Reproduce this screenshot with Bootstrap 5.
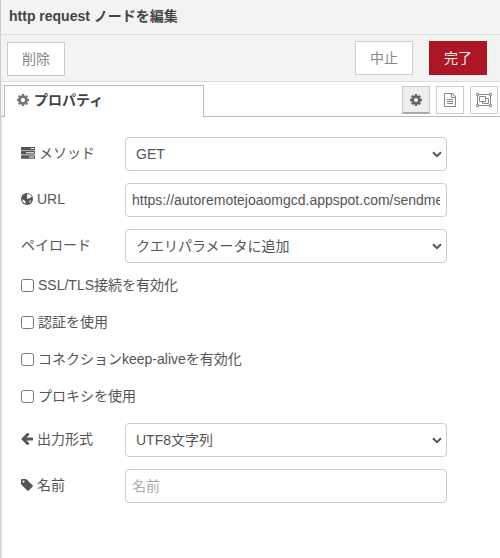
<!DOCTYPE html>
<html lang="ja">
<head>
<meta charset="utf-8">
<meta name="viewport" content="width=device-width, initial-scale=1">
<title>http request ノードを編集</title>
<link href="https://cdn.jsdelivr.net/npm/bootstrap@5.3.0/dist/css/bootstrap.min.css" rel="stylesheet">
<style>
body{font:14px/20px "Liberation Sans","Noto Sans CJK JP",sans-serif;color:#555;background:#fff}
.tray{height:558px;border-left:1px solid #ccc;box-shadow:inset 3px 0 3px -2px #e4e4e4}
.tray-title{height:35px;padding:6px 8px 0;font-weight:700;color:#444;background:#f3f3f3;border-bottom:1px solid #ddd}
.tray-tools{height:47px;padding:6px 13px 0 6px;background:#f3f3f3;border-bottom:1px solid #ddd}
.tray-tools .btn{width:58px;height:34px;padding:0;font-size:14px;line-height:32px;border-radius:0;border:1px solid #ccc;background:#fff;color:#888}
.tray-tools .btn-delete{margin-top:1px}
.tray-tools .btn-done{background:#ad1625;border-color:#ad1625;color:#eee}
.tab-strip{height:35px;padding:3px 2px 0 3px;box-shadow:inset 0 -1px #bbb}
.tab-main{width:200px;height:32px;padding:4px 0 0 12px;border:1px solid #bbb;border-bottom:0;background:#fff;color:#444;font-weight:700}
.tab-main svg{margin:4px 5px 0 0;color:#777}
.tab-tools{gap:6px}
.tab-tool{width:28px;height:28px;border:1px solid #ccc;color:#888;background:#fff;margin-top:1px}
.tab-tool.on{background:#eee;border-bottom:2px solid #aaa;color:#666}
svg{fill:currentColor;display:block;flex:none}
.form-area{padding:20px 0 0 20px}
.field{height:34px;margin-bottom:12px}
.field label{width:104px;height:32px;gap:4px}
.field .form-control,.field .form-select{width:322px;height:34px;font-size:14px;line-height:20px;color:#555;border-color:#ccc;border-radius:4px;padding:6px}
.field .form-select{padding:6px 20px 6px 10px;background-image:url("data:image/svg+xml,%3Csvg xmlns='http://www.w3.org/2000/svg' viewBox='0 0 10 7'%3E%3Cpath d='M1 1.2 5 5.2 9 1.2' fill='none' stroke='%23555' stroke-width='2'/%3E%3C/svg%3E");background-size:10px 7px;background-position:right 4px center}
.field .form-control::placeholder{color:#aaa}
.option{height:20px;margin-bottom:17px;gap:4px}
.option .form-check-input{width:13px;height:13px;margin:0;border:1px solid #767676;border-radius:2.5px}
</style>
</head>
<body>
<svg class="d-none">
<symbol id="cog" viewBox="0 0 1536 1536"><path d="M1024 768q0-106-75-181t-181-75-181 75-75 181 75 181 181 75 181-75 75-181zm512-109v222q0 12-8 23t-20 13l-185 28q-19 54-39 91 35 50 107 138 10 12 10 25t-9 23q-27 37-99 108t-94 71q-12 0-26-9l-138-108q-44 23-91 38-16 136-29 186-7 28-36 28H657q-14 0-24.500-8.500T621 1506l-28-184q-49-16-90-37l-141 107q-10 9-25 9-14 0-25-11-126-114-165-168-7-10-7-23 0-12 8-23 15-21 51-66.500t54-70.500q-27-50-41-99L29 913q-13-2-21-12.500T0 877V655q0-12 8-23t19-13l186-28q14-46 39-92-40-57-107-138-10-12-10-24 0-10 9-23 26-36 98.500-107.500T337 135q13 0 26 10l138 107q44-23 91-38 16-136 29-186 7-28 36-28h222q14 0 24.500 8.500T915 30l28 184q49 16 90 37l142-107q9-9 24-9 13 0 25 10 129 119 165 170 7 8 7 22 0 12-8 23-15 21-51 66.500t-54 70.500q26 50 41 98l183 28q13 2 21 12.500t8 23.500z"/></symbol>
</svg>
<main class="tray">
<header class="tray-title">http request ノードを編集</header>
<div class="tray-tools d-flex">
<button class="btn btn-delete me-auto">削除</button>
<button class="btn me-3">中止</button>
<button class="btn btn-done">完了</button>
</div>
<div class="tab-strip d-flex">
<div class="tab-main d-flex me-auto"><svg width="12" height="12"><use href="#cog"/></svg>プロパティ</div>
<div class="tab-tools d-flex">
<div class="tab-tool on d-flex align-items-center justify-content-center"><svg width="12" height="12"><use href="#cog"/></svg></div>
<div class="tab-tool d-flex align-items-center justify-content-center"><svg width="12" height="14" viewBox="0 0 1536 1792"><path d="M1468 380q28 28 48 76t20 88v1152q0 40-28 68t-68 28H96q-40 0-68-28t-28-68V96q0-40 28-68T96 0h896q40 0 88 20t76 48zm-444-244v376h376q-10-29-22-41l-313-313q-12-12-41-22zm384 1528V640H992q-40 0-68-28t-28-68V128H128v1536h1280zM384 800q0-14 9-23t23-9h704q14 0 23 9t9 23v64q0 14-9 23t-23 9H416q-14 0-23-9t-9-23v-64zm736 224q14 0 23 9t9 23v64q0 14-9 23t-23 9H416q-14 0-23-9t-9-23v-64q0-14 9-23t23-9h704zm0 256q14 0 23 9t9 23v64q0 14-9 23t-23 9H416q-14 0-23-9t-9-23v-64q0-14 9-23t23-9h704z"/></svg></div>
<div class="tab-tool d-flex align-items-center justify-content-center"><svg width="16" height="14" viewBox="0 0 16 14"><g fill="none" stroke="currentColor"><path d="M3 1.500h10M3 12.500h10M1.500 3v8M14.500 3v8M.5.500h2v2h-2zM13.500.500h2v2h-2zM.5 11.500h2v2h-2zM13.500 11.500h2v2h-2z"/><path d="M3.500 3.500h6v5h-6zM9.500 5.500h3v5h-6v-2"/></g></svg></div>
</div>
</div>
<form class="form-area">
<div class="field d-flex"><label class="d-flex align-items-center"><svg width="14" height="12" viewBox="0 0 14 12"><path fill-rule="evenodd" d="M.5 0h13l.5.5v2.500l-.5.500H.500L0 3V.500zM10 1h3v1h-3zM.5 4h13l.5.5V7l-.5.500H.500L0 7V4.500zM5 5.200h8v1H5zM.5 8.200h13l.5.500v2.500l-.5.500H.500L0 11.200V8.700zM8 9.500h5v1H8z"/></svg>メソッド</label>
<select class="form-select"><option>GET</option></select></div>
<div class="field d-flex"><label class="d-flex align-items-center"><svg width="12" height="12" viewBox="0 0 12 12"><circle cx="6" cy="6" r="6"/><path fill="#fff" d="M6.200 1 8 1.100 9.800 2.200 10.800 4 9.600 4.200 9 5.300 7.700 5.200 6.700 6 5.600 5.400 6.400 4.100 5.600 3.300 6.500 2.300zM1.200 6.300 2.600 7 3.600 7.400 4.600 8.200 4.300 9.300 4.900 10.800 3 10 1.500 8.300zM8.700 7.300 10 7.600 9.500 9 8.300 10z"/></svg>URL</label>
<input class="form-control" type="text" value="https://autoremotejoaomgcd.appspot.com/sendmessage"></div>
<div class="field d-flex"><label class="d-flex align-items-center">ペイロード</label>
<select class="form-select"><option>クエリパラメータに追加</option></select></div>
<div class="options">
<label class="option d-flex align-items-center"><input class="form-check-input" type="checkbox">SSL/TLS接続を有効化</label>
<label class="option d-flex align-items-center"><input class="form-check-input" type="checkbox">認証を使用</label>
<label class="option d-flex align-items-center"><input class="form-check-input" type="checkbox">コネクションkeep-aliveを有効化</label>
<label class="option d-flex align-items-center"><input class="form-check-input" type="checkbox">プロキシを使用</label>
</div>
<div class="field d-flex"><label class="d-flex align-items-center"><svg width="12" height="12" viewBox="0 -64 1536 1536"><path d="M1536 640v128q0 53-32.500 90.500T1419 896H715l293 294q38 36 38 90t-38 90l-75 76q-37 37-90 37-52 0-91-37L101 795q-37-37-37-91 0-53 37-90L752-37q38-38 91-38 52 0 90 38l75 74q38 38 38 91t-38 91L715 512h704q52 0 84.500 37.500T1536 640z"/></svg>出力形式</label>
<select class="form-select"><option>UTF8文字列</option></select></div>
<div class="field d-flex"><label class="d-flex align-items-center"><svg width="12" height="12" viewBox="0 0 1536 1536"><path d="M448 320q0-53-37.500-90.500T320 192t-90.500 37.500T192 320t37.500 90.500T320 448t90.500-37.500T448 320zm1067 576q0 53-37 90l-491 492q-39 37-91 37-53 0-90-37L91 762q-38-37-64.500-101T0 544V128q0-52 38-90t90-38h416q53 0 117 26.500T763 91l715 714q37 39 37 91z"/></svg>名前</label>
<input class="form-control" type="text" placeholder="名前"></div>
</form>
</main>
<script src="https://cdn.jsdelivr.net/npm/bootstrap@5.3.0/dist/js/bootstrap.bundle.min.js"></script>
</body>
</html>
